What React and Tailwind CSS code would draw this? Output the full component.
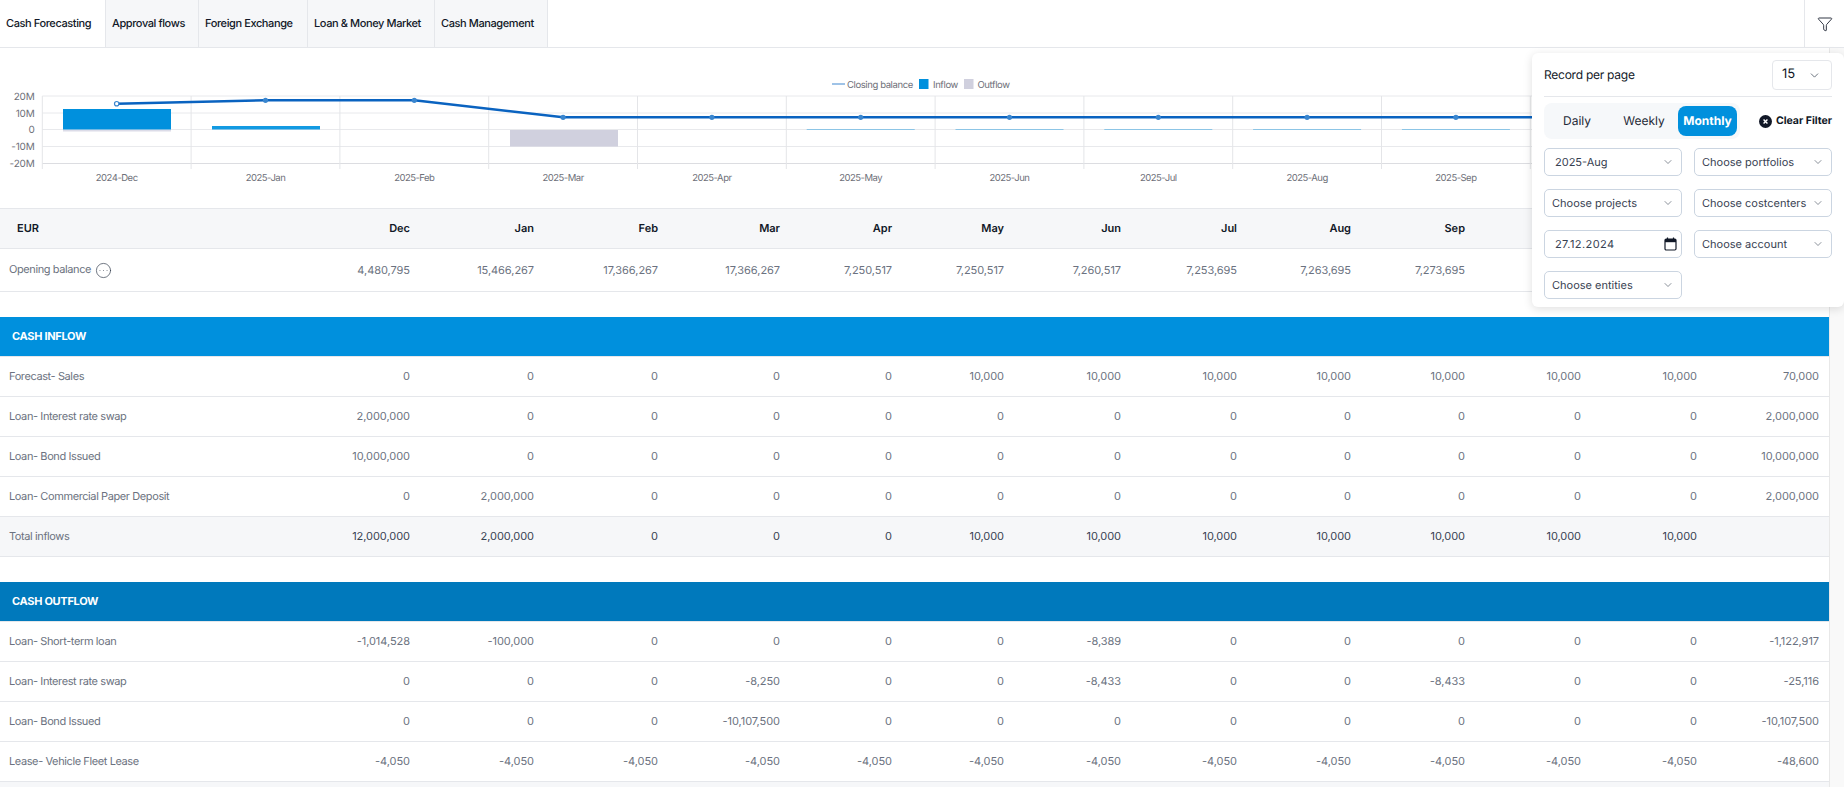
import React from "react";
import { ChevronDown, CircleEllipsis, Funnel } from "lucide-react";

const tabs = [
  ["Cash Forecasting", "w-[105px] bg-white"],
  ["Approval flows", "w-[93px] bg-[#f6f7f9] border-l border-[#e5e7eb]"],
  ["Foreign Exchange", "w-[109px] bg-[#f6f7f9] border-l border-[#e5e7eb]"],
  ["Loan & Money Market", "w-[127px] bg-[#f6f7f9] border-l border-[#e5e7eb]"],
  ["Cash Management", "w-[114px] bg-[#f6f7f9] border-x border-[#e5e7eb]"],
];

const colWidths = ["w-[296px]", "w-[124px]", "w-[124px]", "w-[124px]", "w-[122px]", "w-[112px]", "w-[112px]", "w-[117px]", "w-[116px]", "w-[114px]", "w-[114px]", "w-[116px]", "w-[116px]", "w-[122px]"];

const z = (n) => Array(n).fill("0");
const k10 = (n) => Array(n).fill("10,000");

const inflow = [
  ["Forecast- Sales", [...z(5), ...k10(7), "70,000"]],
  ["Loan- Interest rate swap", ["2,000,000", ...z(11), "2,000,000"]],
  ["Loan- Bond Issued", ["10,000,000", ...z(11), "10,000,000"]],
  ["Loan- Commercial Paper Deposit", ["0", "2,000,000", ...z(10), "2,000,000"]],
];
const outflow = [
  ["Loan- Short-term loan", ["-1,014,528", "-100,000", ...z(4), "-8,389", ...z(5), "-1,122,917"]],
  ["Loan- Interest rate swap", ["0", "0", "0", "-8,250", "0", "0", "-8,433", "0", "0", "-8,433", "0", "0", "-25,116"]],
  ["Loan- Bond Issued", ["0", "0", "0", "-10,107,500", ...z(8), "-10,107,500"]],
  ["Lease- Vehicle Fleet Lease", [...Array(12).fill("-4,050"), "-48,600"]],
];

function Row({ label, values }) {
  return (
    <tr className="h-[40px] border-b border-[#e5e7eb]">
      <td className="pl-[9px] text-[11px] tracking-[-0.4px] text-[#6b7280]">{label}</td>
      {values.map((v, i) => (
        <td key={i} className="pr-[10px] text-right text-[11px] tracking-[-0.05px] text-[#6b7280]">{v}</td>
      ))}
    </tr>
  );
}

function Section({ title, color }) {
  return (
    <tr className={`h-[40px] ${color} border-b border-[#e5e7eb]`}>
      <td colSpan={14} className="pl-[12px] text-[11px] font-bold tracking-[-0.3px] text-white">{title}</td>
    </tr>
  );
}

function Select({ children, pad = "pl-[7px]", chev = "pr-[7px]" }) {
  return (
    <div className={`h-[28px] flex items-center justify-between rounded-[5px] border border-[#cbd5e1] bg-white ${pad} ${chev}`}>
      <span className="whitespace-nowrap text-[11px] text-[#374151]">{children}</span>
      <ChevronDown size={12} strokeWidth={1.3} className="text-[#4b5563]" />
    </div>
  );
}

const months = ["2024-Dec", "2025-Jan", "2025-Feb", "2025-Mar", "2025-Apr", "2025-May", "2025-Jun", "2025-Jul", "2025-Aug", "2025-Sep", "2025-Oct"];
const STEP = 148.8;
const X0 = 42.3;

function Chart() {
  const cx = (i) => X0 + STEP * (i + 0.5);
  const ys = [103.7, 100.3, 100.3, 117.3, 117.3, 117.3, 117.3, 117.3, 117.3, 117.3, 117.3];
  const points = ys.map((y, i) => `${cx(i)},${y}`).join(" ");
  return (
    <svg viewBox="0 48 1829 160" className="block h-[160px] w-[1829px]" fontFamily="Inter, sans-serif">
      {[96, 113, 129.5, 146.5].map((y) => (
        <line key={y} x1={X0} x2={1829} y1={y} y2={y} stroke="#e8e9ec" strokeWidth="1" />
      ))}
      <line x1={X0} x2={1829} y1={163.5} y2={163.5} stroke="#dcdde1" strokeWidth="1" />
      {Array.from({ length: 11 }).map((_, i) => (
        <line key={i} x1={X0 + STEP * i} x2={X0 + STEP * i} y1={96} y2={169} stroke="#e4e5e8" strokeWidth="1" />
      ))}
      {[["20M", 96], ["10M", 113], ["0", 129.5], ["-10M", 146.5], ["-20M", 163.5]].map(([t, y]) => (
        <text key={t} x={34.5} y={y + 3.5} textAnchor="end" fontSize="10" letterSpacing="-0.2" fill="#6e7079">{t}</text>
      ))}
      {months.map((m, i) => (
        <text key={m} x={cx(i)} y={180.5} textAnchor="middle" fontSize="9.5" letterSpacing="-0.5" fill="#6e7079">{m}</text>
      ))}
      <rect x={63} y={129.5} width={108} height={2} fill="#dcdce8" />
      <rect x={63} y={109} width={108} height={20.5} fill="#0090dd" />
      <rect x={212} y={126} width={108} height={3.5} fill="#129ae2" />
      <rect x={510} y={130} width={108} height={16.5} fill="#d0d0de" />
      {[5, 6, 7, 8, 9, 10].map((i) => (
        <rect key={i} x={cx(i) - 54} y={129} width={108} height={1} fill="#8cc5e6" />
      ))}
      <polyline points={points} fill="none" stroke="#0a63c0" strokeWidth="2.5" />
      {ys.map((y, i) =>
        i === 0 ? (
          <circle key={i} cx={cx(i)} cy={y} r="2.2" fill="#fff" stroke="#3a86cf" strokeWidth="1.2" />
        ) : (
          <circle key={i} cx={cx(i)} cy={y} r="2.6" fill="#3a86cf" />
        )
      )}
      <line x1={832} x2={845} y1={84} y2={84} stroke="#9fc3e7" strokeWidth="2" />
      <text x={847} y={87.5} fontSize="9.5" letterSpacing="-0.4" fill="#6e7079">Closing balance</text>
      <rect x={919} y={79} width={9.5} height={10} fill="#0090dd" />
      <text x={933} y={87.5} fontSize="9.5" letterSpacing="-0.4" fill="#6e7079">Inflow</text>
      <rect x={964} y={79} width={9.5} height={10} fill="#d0d0de" />
      <text x={977.5} y={87.5} fontSize="9.5" letterSpacing="-0.4" fill="#6e7079">Outflow</text>
    </svg>
  );
}

export default function App() {
  return (
    <div className="relative h-[787px] w-[1844px] overflow-hidden bg-white font-['Inter',sans-serif] [text-rendering:geometricPrecision]">
      <header className="flex h-[48px] border-b border-[#e5e7eb]">
        {tabs.map(([t, c]) => (
          <div key={t} className={`flex items-center pl-[6px] text-[11px] font-medium tracking-[-0.4px] text-[#111827] ${c}`}>{t}</div>
        ))}
        <div className="ml-auto flex w-[40px] items-center justify-center border-l border-[#e5e7eb]">
          <Funnel size={16} strokeWidth={1.3} className="text-[#111827]" />
        </div>
      </header>

      <div className="flex">
        <main className="w-[1829px] shrink-0">
          <Chart />
          <table className="w-[1829px] table-fixed border-collapse">
            <colgroup>
              {colWidths.map((w, i) => <col key={i} className={w} />)}
            </colgroup>
            <tbody>
              <tr className="h-[40px] border-y border-[#e5e7eb] bg-[#f6f7f9]">
                <td className="pl-[17px] text-[11px] font-semibold text-[#111827]">EUR</td>
                {["Dec", "Jan", "Feb", "Mar", "Apr", "May", "Jun", "Jul", "Aug", "Sep", "Oct", "Nov", ""].map((m, i) => (
                  <td key={i} className="pr-[10px] text-right text-[11px] font-semibold text-[#111827]">{m}</td>
                ))}
              </tr>
              <tr className="h-[43px] border-b border-[#e5e7eb]">
                <td className="pl-[9px] text-[11px] tracking-[-0.4px] text-[#6b7280]">
                  <span className="inline-flex items-center gap-[4px]">
                    <span className="-mt-[3px]">Opening balance</span>
                    <CircleEllipsis size={17} strokeWidth={1} className="text-[#374151]" />
                  </span>
                </td>
                {["4,480,795", "15,466,267", "17,366,267", "17,366,267", "7,250,517", "7,250,517", "7,260,517", "7,253,695", "7,263,695", "7,273,695", "", "", ""].map((v, i) => (
                  <td key={i} className="pr-[10px] text-right text-[11px] tracking-[-0.05px] text-[#6b7280]">{v}</td>
                ))}
              </tr>
              <tr className="h-[25px]"><td colSpan={14} /></tr>
              <Section title="CASH INFLOW" color="bg-[#0090dd]" />
              {inflow.map(([l, v]) => <Row key={l} label={l} values={v} />)}
              <tr className="h-[40px] border-b border-[#e5e7eb] bg-[#f6f7f9]">
                <td className="pl-[9px] text-[11px] tracking-[-0.4px] text-[#6b7280]">Total inflows</td>
                {["12,000,000", "2,000,000", "0", "0", "0", ...k10(7), ""].map((v, i) => (
                  <td key={i} className="pr-[10px] text-right text-[11px] tracking-[-0.05px] text-[#374151]">{v}</td>
                ))}
              </tr>
              <tr className="h-[25px]"><td colSpan={14} /></tr>
              <Section title="CASH OUTFLOW" color="bg-[#0079bc]" />
              {outflow.map(([l, v]) => <Row key={l} label={l} values={v} />)}
              <tr className="h-[40px] bg-[#f6f7f9]"><td colSpan={14} /></tr>
            </tbody>
          </table>
        </main>
        <div className="h-[739px] w-[15px] shrink-0 border-l border-[#e8e8e8] bg-[#f9f9f9]" />
      </div>

      <aside className="absolute right-0 top-[53px] h-[254px] w-[312px] rounded-[6px] bg-white px-[12px] pt-[7px] shadow-[0_2px_10px_rgba(0,0,0,0.13)]">
        <div className="flex h-[30px] items-center justify-between">
          <span className="text-[12px] tracking-[-0.25px] text-[#111827]">Record per page</span>
          <div className="flex h-[30px] w-[60px] items-center justify-between rounded-[4px] border border-[#e5e7eb] pl-[9px] pr-[10px]">
            <span className="text-[13px] text-[#111827]">15</span>
            <ChevronDown size={13} strokeWidth={1.5} className="text-[#4b5563]" />
          </div>
        </div>
        <div className="mt-[6px] border-t border-[#e5e7eb]" />
        <div className="mt-[6px] flex items-center justify-between">
          <div className="flex h-[36px] w-[196px] items-center rounded-[8px] bg-[#f6f8fa] text-[12px] text-[#1f2937]">
            <span className="w-[66px] text-center">Daily</span>
            <span className="w-[68px] text-center">Weekly</span>
            <span className="flex h-[30px] w-[59px] items-center justify-center rounded-[8px] bg-[#0090dd] font-bold text-white">Monthly</span>
          </div>
          <div className="flex items-center gap-[4px]">
            <svg width="13" height="13" viewBox="0 0 12 12">
              <circle cx="6" cy="6" r="6" fill="#111827" />
              <path d="M4.2 4.2 7.8 7.8M7.8 4.2 4.2 7.8" stroke="#fff" strokeWidth="1.3" />
            </svg>
            <span className="text-[10.5px] font-bold text-[#111827]">Clear Filter</span>
          </div>
        </div>
        <div className="mt-[9px] grid grid-cols-[138px_138px] gap-x-[12px] gap-y-[13px]">
          <Select pad="pl-[10px]">2025-Aug</Select>
          <Select>Choose portfolios</Select>
          <Select>Choose projects</Select>
          <Select>Choose costcenters</Select>
          <div className="flex h-[28px] items-center justify-between rounded-[5px] border border-[#cbd5e1] pl-[10px] pr-[4px]">
            <span className="text-[11px] tracking-[0.4px] text-[#374151]">27.12.2024</span>
            <svg width="13" height="14" viewBox="0 0 13 14">
              <rect x="1" y="2" width="11" height="11" rx="1.2" fill="none" stroke="#111827" strokeWidth="1.2" />
              <rect x="1" y="2" width="11" height="3.2" fill="#111827" />
              <path d="M3.5 .6v2.2M9.5 .6v2.2" stroke="#111827" strokeWidth="1.2" />
            </svg>
          </div>
          <Select>Choose account</Select>
          <Select>Choose entities</Select>
        </div>
      </aside>
    </div>
  );
}
